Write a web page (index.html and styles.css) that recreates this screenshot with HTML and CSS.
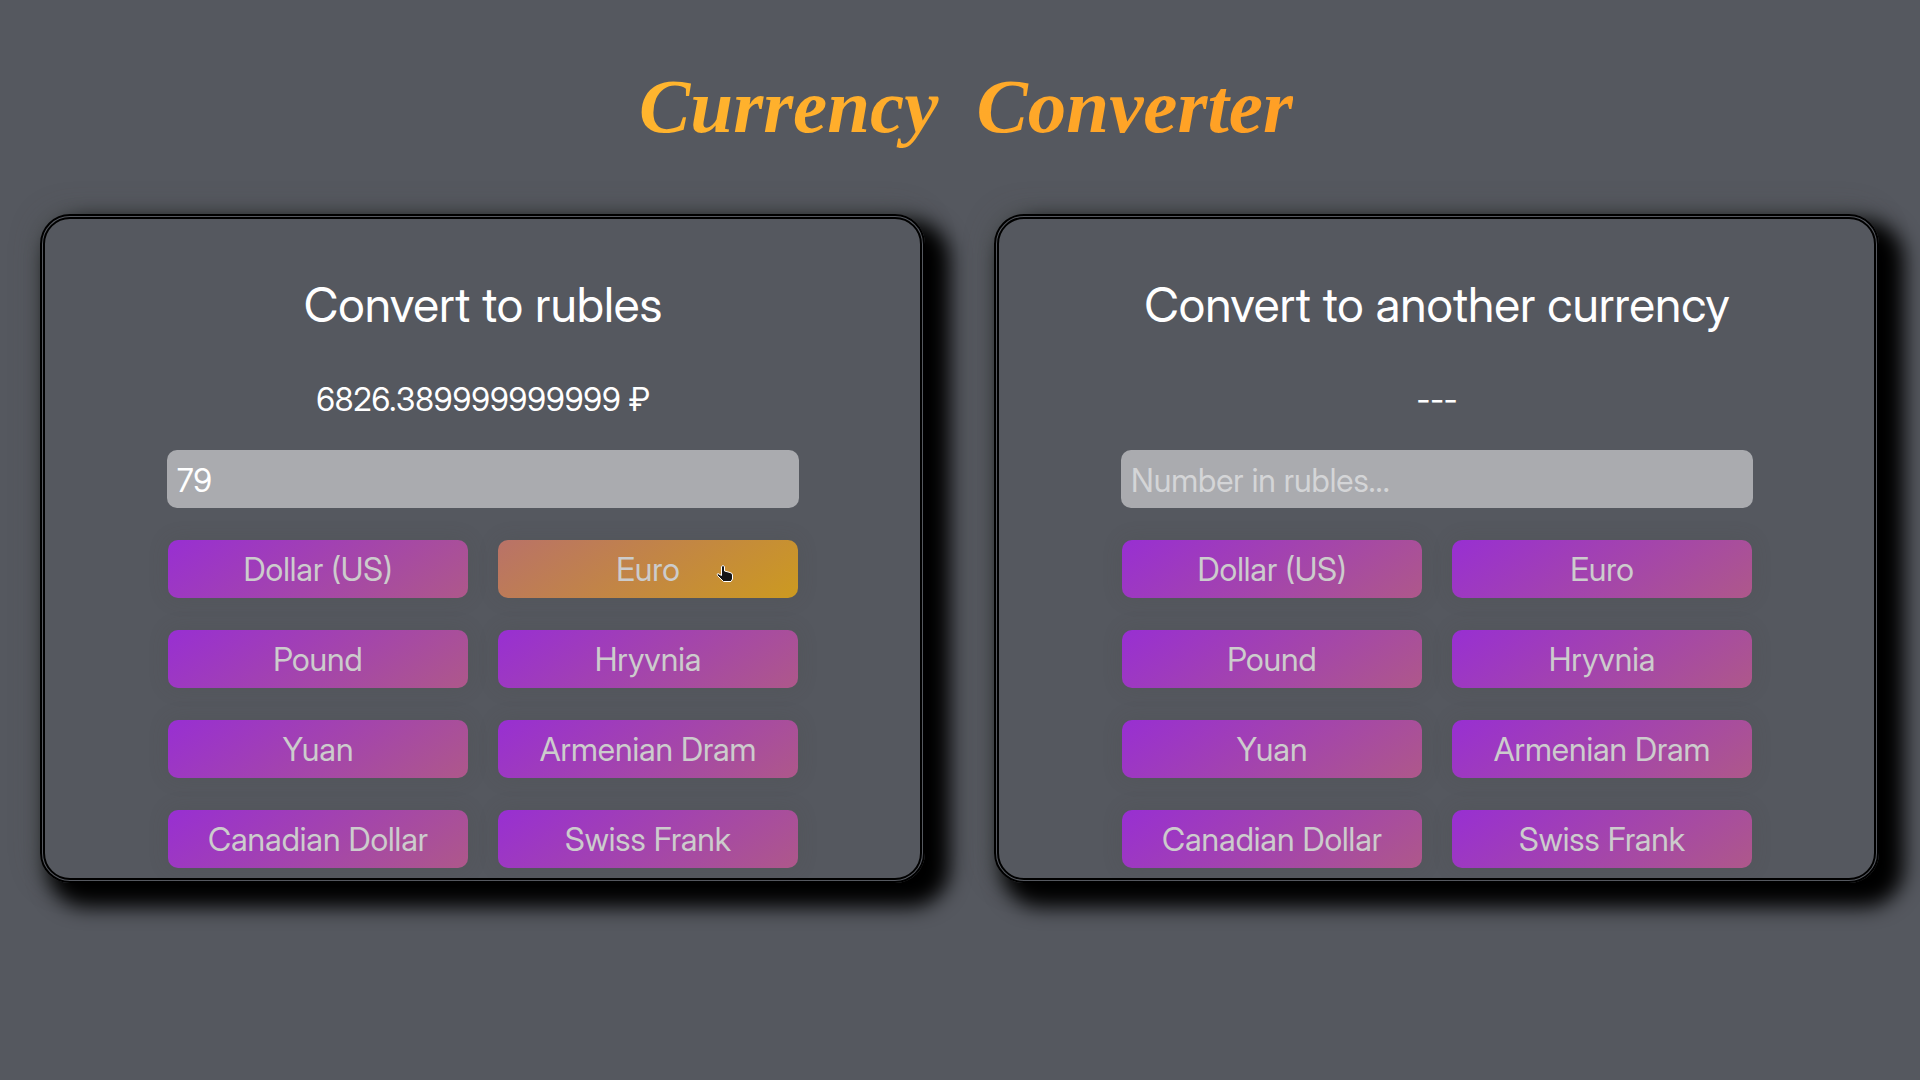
FILE: index.html
```html
<!DOCTYPE html>
<html lang="en">
<head>
<meta charset="utf-8">
<meta name="viewport" content="width=device-width, initial-scale=1">
<title>Currency Converter</title>
<link rel="stylesheet" href="styles.css">
</head>
<body>
<header class="header">
  <h1 class="title"><span>Currency</span> <span>Converter</span></h1>
</header>
<main class="converters">
  <section class="card">
    <h2 class="card-title"><label for="foreign">Convert to rubles</label></h2>
    <output class="result" for="foreign">6826.389999999999 ₽</output>
    <input class="amount" id="foreign" type="text" inputmode="decimal" value="79">
    <div class="currencies">
      <button class="currency" type="button">Dollar (US)</button>
      <button class="currency active" type="button">Euro
        <svg class="pointer" viewBox="0 0 18 20" aria-hidden="true"><path d="M5.500 2.500Q7 .5 8.500 2.500V7L14 8.500Q16.500 9 16.500 11V15L15 17.500H7.500L1.500 11.500Q.5 10 2 9.500L5.500 11.500Z"/></svg>
      </button>
      <button class="currency" type="button">Pound</button>
      <button class="currency" type="button">Hryvnia</button>
      <button class="currency" type="button">Yuan</button>
      <button class="currency" type="button">Armenian Dram</button>
      <button class="currency" type="button">Canadian Dollar</button>
      <button class="currency" type="button">Swiss Frank</button>
    </div>
  </section>
  <section class="card">
    <h2 class="card-title"><label for="rubles">Convert to another currency</label></h2>
    <output class="result" for="rubles">---</output>
    <input class="amount" id="rubles" type="text" inputmode="decimal" placeholder="Number in rubles...">
    <div class="currencies">
      <button class="currency" type="button">Dollar (US)</button>
      <button class="currency" type="button">Euro</button>
      <button class="currency" type="button">Pound</button>
      <button class="currency" type="button">Hryvnia</button>
      <button class="currency" type="button">Yuan</button>
      <button class="currency" type="button">Armenian Dram</button>
      <button class="currency" type="button">Canadian Dollar</button>
      <button class="currency" type="button">Swiss Frank</button>
    </div>
  </section>
</main>
</body>
</html>
```
FILE: styles.css
```css
* {
  box-sizing: border-box;
}

body {
  margin: 0;
  min-height: 100vh;
  background: #55585f;
  color: #fff;
  font-family: "Inter Display", Inter, sans-serif;
  font-variation-settings: "opsz" 32;
  font-size: 32px;
  line-height: 42px;
}

.header {
  display: flex;
  justify-content: center;
  padding: 46px 40px 48px 52px;
}

.title {
  display: flex;
  flex-wrap: wrap;
  justify-content: center;
  column-gap: 38px;
  margin: 0;
  font: italic bold 77px/120px "Liberation Serif", serif;
  background: linear-gradient(135deg, #ffb72f, #ff9d24);
  background-clip: text;
  -webkit-background-clip: text;
  color: transparent;
}

.converters {
  display: grid;
  grid-template-columns: repeat(auto-fit, minmax(min(100%, 600px), 1fr));
  gap: 69px;
  padding: 0 41px 69px 40px;
}

.card {
  display: flex;
  flex-direction: column;
  padding: 56px 121px 10px 122px;
  border: 5px double #000;
  border-radius: 30px;
  box-shadow: 16px 15px 20px 9px #000, 0 0 30px rgba(70, 75, 70, 0.4);
}

.card-title {
  margin: 0 0 44px;
  font-size: 48px;
  font-weight: 400;
  line-height: 60px;
  text-align: center;
}

.result {
  margin-bottom: 29px;
  font-variation-settings: "opsz" 25;
  text-align: center;
}

.amount {
  width: 100%;
  height: 58px;
  padding: 2px 10px 0;
  border: 0;
  border-radius: 10px;
  background: #aaabaf;
  color: #fff;
  font: inherit;
  font-variation-settings: inherit;
}

.amount::placeholder {
  color: #d4d5d7;
  opacity: 1;
}

.currencies {
  display: grid;
  grid-template-columns: 1fr 1fr;
  gap: 32px 30px;
  margin-top: 32px;
  padding: 0 1px;
}

.currency {
  position: relative;
  height: 58px;
  padding: 2px 0 0;
  border: 0;
  border-radius: 10px;
  background: linear-gradient(145deg, #982fd2, #ae588a);
  box-shadow: 0 0 20px rgba(70, 75, 70, 0.2);
  color: #ccc;
  font: inherit;
  font-variation-settings: inherit;
  cursor: pointer;
}

.currency.active {
  background: linear-gradient(145deg, #b97268, #cc9a20);
}

.pointer {
  position: absolute;
  top: 24px;
  right: 64px;
  width: 18px;
  height: 20px;
  fill: #151515;
  stroke: #fff;
}
```
